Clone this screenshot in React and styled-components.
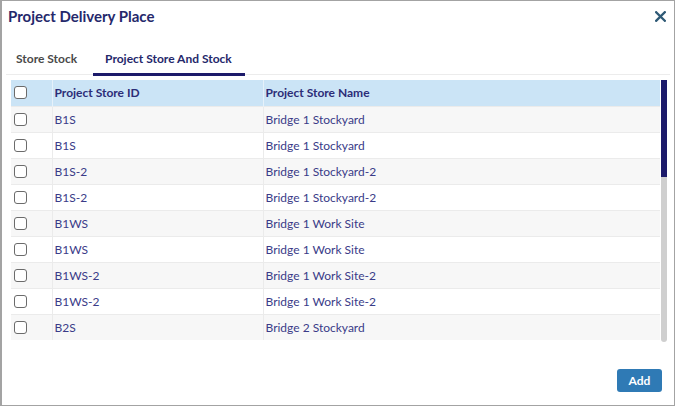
import React from "react";
import styled, { createGlobalStyle } from "styled-components";

const Global = createGlobalStyle`
  html, body { margin: 0; padding: 0; background: #fff; }
  body { font-family: Lato, "Open Sans", sans-serif; }
  * { box-sizing: border-box; }
`;

const Dialog = styled.div`
  width: 675px;
  height: 406px;
  border: 1px solid #a3a3a3;
  border-left-width: 2px;
  background: #fff;
  display: flex;
  flex-direction: column;
`;

const Header = styled.div`
  display: flex;
  align-items: center;
  justify-content: space-between;
  height: 30px;
  padding: 0 7px 0 6px;
`;

const Title = styled.h1`
  margin: 0;
  font-size: 15px;
  font-weight: 700;
  color: #25286b;
`;

const Close = styled.button`
  border: 0;
  background: none;
  padding: 0;
  width: 14px;
  height: 14px;
  display: flex;
  align-items: center;
  justify-content: center;
  cursor: pointer;
`;

const Body = styled.div`
  flex: 1;
  display: flex;
  flex-direction: column;
  padding: 15px 4px 0 4px;
`;

const Tabs = styled.div`
  display: flex;
  height: 29px;
  border-bottom: 1px solid #ececec;
  margin-bottom: 5px;
`;

const Tab = styled.div`
  display: flex;
  align-items: center;
  padding: ${(p) => (p.$active ? "0 13px 3px 12px" : "0 12px 3px 10px")};
  margin-left: ${(p) => (p.$active ? 4 : 0)}px;
  font-size: 12px;
  font-weight: 700;
  color: ${(p) => (p.$active ? "#25286b" : "#4a4a4a")};
  border-bottom: 3px solid ${(p) => (p.$active ? "#1c1a6a" : "transparent")};
  margin-bottom: -2px;
`;

const TableArea = styled.div`
  display: flex;
  gap: 1px;
  height: 262px;
  margin: 0 3px 0 5px;
`;

const TableBox = styled.div`
  flex: 1;
  overflow: hidden;
`;

const ScrollTrack = styled.div`
  width: 6px;
  background: #cfcfcf;
  border-radius: 0 0 3px 3px;
  display: flex;
  flex-direction: column;
`;

const ScrollThumb = styled.div`
  height: 97px;
  background: #1c1a6a;
`;

const Table = styled.table`
  width: 100%;
  border-collapse: collapse;
  font-size: 12px;
  table-layout: fixed;
`;

const Th = styled.th`
  height: 26px;
  background: #cbe4f6;
  text-align: left;
  font-weight: 700;
  color: #2c2d78;
  padding: 0 2px;
  border-left: 1px solid #e6f1fa;
  &:first-child { border-left: 0; padding-left: 3px; }
`;

const Row = styled.tr`
  background: ${(p) => (p.$odd ? "#f7f7f7" : "#fff")};
`;

const Td = styled.td`
  height: 26px;
  padding: 0 2px;
  color: #3a3b88;
  border-top: 1px solid #ebebeb;
  border-left: 1px solid #ebebeb;
  white-space: nowrap;
  &:first-child { border-left: 0; padding-left: 3px; }
`;

const Check = styled.span`
  display: block;
  width: 13px;
  height: 13px;
  border: 1px solid #6b6b6b;
  border-radius: 3px;
  background: #fff;
`;

const Footer = styled.div`
  flex: 1;
  display: flex;
  justify-content: flex-end;
  align-items: flex-start;
  padding: 27px 8px 0 0;
`;

const AddButton = styled.button`
  width: 45px;
  height: 23px;
  border: 0;
  border-radius: 3px;
  background: #2f7ab5;
  color: #fff;
  font-family: Lato, sans-serif;
  font-size: 12px;
  font-weight: 700;
  padding: 0;
`;

const rows = [
  ["B1S", "Bridge 1 Stockyard"],
  ["B1S", "Bridge 1 Stockyard"],
  ["B1S-2", "Bridge 1 Stockyard-2"],
  ["B1S-2", "Bridge 1 Stockyard-2"],
  ["B1WS", "Bridge 1 Work Site"],
  ["B1WS", "Bridge 1 Work Site"],
  ["B1WS-2", "Bridge 1 Work Site-2"],
  ["B1WS-2", "Bridge 1 Work Site-2"],
  ["B2S", "Bridge 2 Stockyard"],
];

export default function App() {
  return (
    <>
      <Global />
      <Dialog>
        <Header>
          <Title>Project Delivery Place</Title>
          <Close aria-label="Close">
            <svg width="11" height="11" viewBox="0 0 11 11">
              <path d="M1.2 1.2 L9.8 9.8 M9.8 1.2 L1.2 9.8" stroke="#2f5a76" strokeWidth="2.3" strokeLinecap="square" />
            </svg>
          </Close>
        </Header>
        <Body>
          <Tabs>
            <Tab>Store Stock</Tab>
            <Tab $active>Project Store And Stock</Tab>
          </Tabs>
          <TableArea>
            <TableBox>
              <Table>
                <colgroup>
                  <col style={{ width: 41 }} />
                  <col style={{ width: 211 }} />
                  <col />
                </colgroup>
                <thead>
                  <tr>
                    <Th><Check /></Th>
                    <Th>Project Store ID</Th>
                    <Th>Project Store Name</Th>
                  </tr>
                </thead>
                <tbody>
                  {rows.map(([id, name], i) => (
                    <Row key={i} $odd={i % 2 === 0}>
                      <Td><Check /></Td>
                      <Td>{id}</Td>
                      <Td>{name}</Td>
                    </Row>
                  ))}
                </tbody>
              </Table>
            </TableBox>
            <ScrollTrack>
              <ScrollThumb />
            </ScrollTrack>
          </TableArea>
          <Footer>
            <AddButton>Add</AddButton>
          </Footer>
        </Body>
      </Dialog>
    </>
  );
}
